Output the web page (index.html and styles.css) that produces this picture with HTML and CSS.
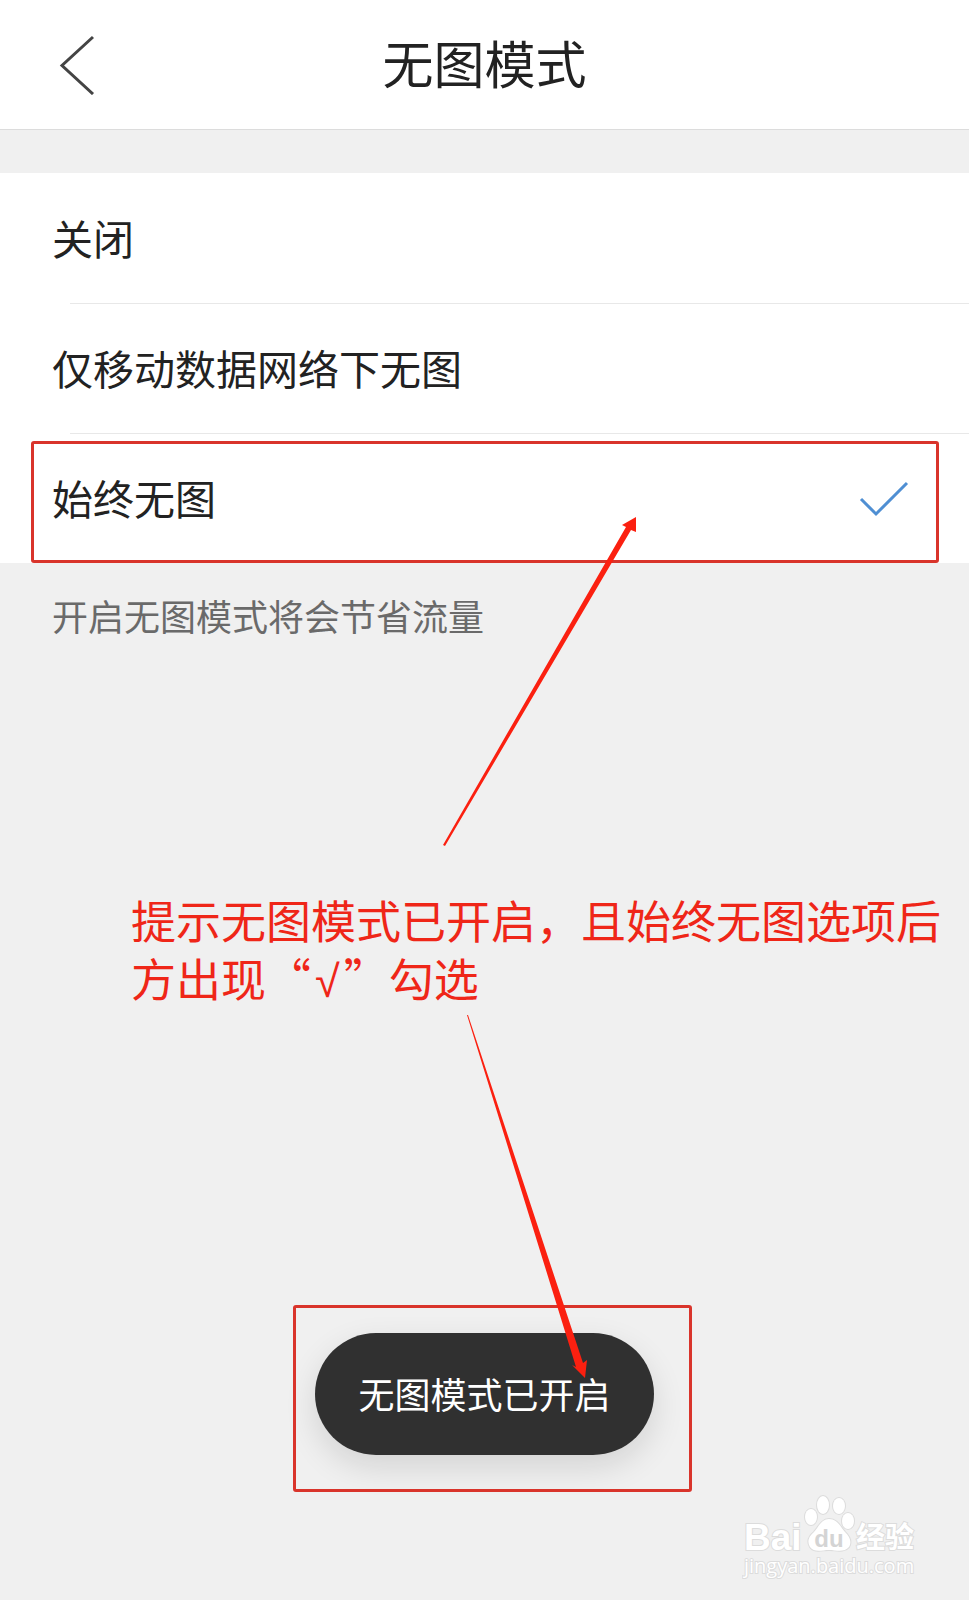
FILE: index.html
```
<!DOCTYPE html>
<html lang="zh-CN">
<head>
  <meta charset="UTF-8" />
  <title>无图模式</title>
  <meta name="viewport" content="width=device-width, initial-scale=1.0" />
  <link rel="stylesheet" href="styles.css">
</head>
<body>
  <header>
    <button type="button" class="back" aria-label="返回">
      <svg width="40" height="60" viewBox="0 0 40 60">
        <path d="M35 2 L4 30.500 L35 59" fill="none" stroke="#444" stroke-width="3" />
      </svg>
    </button>
    <h1>无图模式</h1>
  </header>

  <main>
    <form class="options">
      <label class="option">
        <span>关闭</span>
        <input type="radio" name="mode" value="off" />
      </label>
      <label class="option">
        <span>仅移动数据网络下无图</span>
        <input type="radio" name="mode" value="mobile" />
      </label>
      <label class="option marked">
        <span>始终无图</span>
        <input type="radio" name="mode" value="always" checked />
        <svg class="check" width="50" height="36" viewBox="0 0 50 36">
          <path d="M2 18 L17 33 L48 2" fill="none" stroke="#4f8fd3" stroke-width="3" />
        </svg>
      </label>
    </form>

    <p class="hint">开启无图模式将会节省流量</p>

    <div class="callout">
      <svg class="arrow arrow-up" width="194" height="330" viewBox="0 0 194 330">
        <path d="M0 328 L183 10 L179 8 L193 0 L193 15 L188 13 L2 329 Z" fill="#fb2010" />
      </svg>
      <p>提示无图模式已开启，且始终无图选项后方出现“<span class="tick">√</span>”勾选</p>
      <svg class="arrow arrow-down" width="122" height="364" viewBox="0 0 122 364">
        <path d="M0 0 L109 352 L105 350 L118 363 L120 345 L116 348 L1 0 Z" fill="#fb2010" />
      </svg>
    </div>

    <div class="toast" role="status">无图模式已开启</div>
  </main>

  <svg class="watermark" width="180" height="90" viewBox="0 0 180 90">
    <g fill="#fff" stroke="#dcdcdc" stroke-width="2" paint-order="stroke">
      <text x="2" y="60" class="brand">Bai</text>
      <ellipse cx="69" cy="27" rx="6" ry="8" />
      <ellipse cx="81" cy="15" rx="6" ry="9" />
      <ellipse cx="97" cy="16" rx="6" ry="8" />
      <ellipse cx="106" cy="31" rx="6" ry="8" />
      <path d="M87 29 C80 29 77 36 72 42 C66 47 65 52 68 57 C72 63 80 60 87 60 C94 60 102 63 107 57 C110 52 108 47 103 42 C98 36 95 29 87 29 Z" />
      <text x="114" y="58" class="cn">经验</text>
      <text x="2" y="83" class="site">jingyan.baidu.com</text>
    </g>
    <text x="87" y="57" class="du">du</text>
  </svg>
</body>
</html>
```
FILE: styles.css
```
* {
  box-sizing: border-box;
}
body {
  position: relative;
  margin: 0;
  min-height: 100vh;
  font-family: "Noto Sans CJK SC", sans-serif;
  background-color: #f0f0f0;
  color: #222;
}
header {
  display: grid;
  grid-template-columns: 140px 1fr 140px;
  align-items: center;
  height: 130px;
  background: #fff;
  border-bottom: 1px solid #dcdcdc;
}
h1 {
  margin: 0;
  padding-bottom: 6px;
  font-size: 51px;
  font-weight: 400;
  line-height: 60px;
  text-align: center;
}
.back {
  padding: 0 0 0 58px;
  border: none;
  background: none;
  text-align: left;
  cursor: pointer;
}
.back svg {
  display: block;
}
.options {
  margin-top: 43px;
  background: #fff;
}
.option {
  position: relative;
  display: flex;
  align-items: center;
  justify-content: space-between;
  height: 130px;
  padding: 0 60px 2px 52px;
  font-size: 41px;
  cursor: pointer;
}
.option + .option::before {
  content: "";
  position: absolute;
  top: 0;
  left: 70px;
  right: 0;
  height: 1px;
  background: #e8e8e8;
}
.option input {
  appearance: none;
  width: 0;
  height: 0;
  margin: 0;
}
.check {
  margin-top: 4px;
}
/* red frame over the chosen row */
.marked::after {
  content: "";
  position: absolute;
  inset: 8px 30px 0 31px;
  border: 3px solid #d9342b;
  border-radius: 3px;
}
.hint {
  margin: 0;
  padding: 28px 52px 32px;
  font-size: 36px;
  line-height: 48px;
  color: #6a6a6a;
}
.callout {
  position: relative;
  margin: 220px 20px 0 131px;
  font-size: 45px;
  line-height: 58px;
  color: #ef2618;
}
.callout p {
  margin: 0;
}
.tick {
  padding: 0 4px;
  font-family: "Liberation Sans", sans-serif;
  line-height: 1;
}
.arrow {
  position: absolute;
  z-index: 1;
}
.arrow-up {
  left: 312px;
  bottom: 160px;
}
.arrow-down {
  left: 336px;
  top: 124px;
}
.toast {
  position: relative;
  width: fit-content;
  margin: 326px auto 145px;
  padding: 31px 43px 33px;
  border-radius: 61px;
  background: #303030;
  color: #fff;
  font-size: 36px;
  line-height: 58px;
  box-shadow: 0 12px 32px rgba(0, 0, 0, 0.12);
}
.toast::after {
  content: "";
  position: absolute;
  inset: -28px -38px -37px -22px;
  border: 3px solid #d9342b;
  border-radius: 3px;
}
.watermark {
  position: absolute;
  right: 47px;
  bottom: 20px;
}
.brand {
  font: bold 37px "Liberation Sans", sans-serif;
}
.cn {
  font: bold 29px "Noto Sans CJK SC", sans-serif;
}
.site {
  font: 20px "Open Sans", sans-serif;
}
.du {
  font: bold 24px "Liberation Sans", sans-serif;
  fill: #d4d4d4;
  text-anchor: middle;
}
```
